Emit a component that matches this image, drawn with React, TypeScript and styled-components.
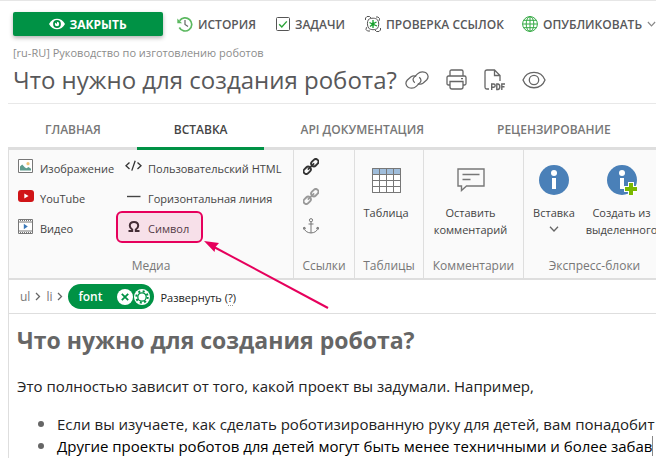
import React from "react";
import styled, { createGlobalStyle, css } from "styled-components";

const green = "#009245";
const pink = "#e6005c";
const line = "#dedede";

const GlobalStyle = createGlobalStyle`
  *, *::before, *::after { box-sizing: border-box; }
  body {
    margin: 0;
    background: #fff;
    color: #444;
    font-family: "Open Sans", "Noto Sans", sans-serif;
    font-size: 12px;
    overflow: hidden;
  }
  button {
    font: inherit;
    color: inherit;
    border: 0;
    padding: 0;
    background: none;
    white-space: nowrap;
    cursor: pointer;
  }
  svg { display: block; flex: none; }
`;

const Page = styled.div`
  border-top: 1px solid #e6e6e6;
  overflow: hidden;
`;

const TopBar = styled.header`
  display: flex;
  align-items: center;
  padding: 11px 0 0 13px;
  height: 35px;
`;

const CloseButton = styled.button`
  display: flex;
  flex: none;
  align-items: center;
  justify-content: center;
  gap: 4px;
  width: 150px;
  height: 24px;
  margin-right: 14px;
  border-radius: 2px;
  background: ${green};
  color: #fff;
  font-weight: 700;
  box-shadow: 0 2px 4px rgba(0, 0, 0, 0.3);
`;

const TopAction = styled.button<{ $gap: number }>`
  display: flex;
  flex: none;
  align-items: center;
  gap: 5px;
  margin-right: ${(p) => p.$gap}px;
  color: #58585a;
  font-weight: 600;
`;

const Trail = styled.p`
  margin: 0;
  padding: 7px 0 0 13px;
  font-size: 11px;
  line-height: 20px;
  color: #8c8c8c;
`;

const TitleRow = styled.div`
  display: flex;
  align-items: center;
  height: 41px;
  margin-left: 8px;
  padding: 0 0 7px 5px;
  border-bottom: 1px solid #e8e8e8;
`;

const Title = styled.h1`
  margin: 0 8px 0 0;
  font-size: 24px;
  line-height: 32px;
  font-weight: 400;
  white-space: nowrap;
  color: #58585a;
`;

const TitleTools = styled.div`
  display: flex;
  align-items: center;
  gap: 17px;
  color: #666;
`;

const Workspace = styled.main`
  margin-left: 8px;
`;

const Tabs = styled.nav`
  display: flex;
  height: 46px;
  padding-top: 8px;
  box-shadow: inset 0 -3px ${line};
`;

const Tab = styled.button<{ $active?: boolean }>`
  flex: none;
  padding: 0 36px 0 37px;
  border-bottom: 3px solid ${(p) => (p.$active ? green : "transparent")};
  color: ${(p) => (p.$active ? "#444" : "#777")};
  font-weight: 600;
`;

const Ribbon = styled.section`
  display: flex;
  height: 130px;
  border-left: 1px solid ${line};
  border-bottom: 2px solid ${line};
  background: #fafafa;
`;

const Group = styled.div<{ $width: number }>`
  display: flex;
  flex: none;
  flex-direction: column;
  width: ${(p) => p.$width}px;
  border-right: 1px solid ${line};
`;

const GroupBody = styled.div<{ $columns?: string }>`
  display: grid;
  grid-template-columns: ${(p) => p.$columns || "1fr"};
  height: 104px;
  padding-right: 6px;
  font-size: 11px;
`;

const GroupLabel = styled.div`
  line-height: 24px;
  text-align: center;
  color: #777;
  white-space: nowrap;
`;

const Stack = styled.div`
  display: flex;
  flex-direction: column;
  align-items: flex-start;
  padding: 3px 0 0 8px;
`;

const SmallButton = styled.button`
  position: relative;
  display: flex;
  align-items: center;
  gap: 6px;
  height: 30px;
`;

const SmallIcon = styled.span`
  display: flex;
  justify-content: center;
  width: 17px;
  padding-bottom: 4px;
`;

const LargeButton = styled.button`
  display: flex;
  flex-direction: column;
  align-items: center;
  padding-top: 15px;
  line-height: 17px;
`;

const LargeIcon = styled.span`
  display: flex;
  align-items: center;
  height: 30px;
  margin-bottom: 9px;
`;

const DropMark = styled.span`
  display: flex;
  align-items: center;
  height: 16px;
`;

const Highlight = styled.span`
  position: absolute;
  inset: -2px -14px 0 -9px;
  border: 2px solid ${pink};
  border-radius: 6px;
  background: rgba(230, 0, 92, 0.1);
`;

const Pointer = styled.svg`
  position: absolute;
  left: 100%;
  top: 100%;
  margin: -2px 0 0 15px;
  pointer-events: none;
`;

const PathBar = styled.div`
  display: flex;
  align-items: center;
  height: 34px;
  padding-left: 11px;
  border-left: 1px solid ${line};
  border-bottom: 1px solid ${line};
  color: #777;
`;

const PathLink = styled.button`
  display: flex;
  align-items: center;
  gap: 5px;
  margin-right: 5px;
`;

const Pill = styled.div`
  display: flex;
  align-items: center;
  width: 86px;
  height: 25px;
  padding: 0 4px 0 10px;
  border-radius: 13px;
  background: ${green};
  color: #fff;
  font-weight: 600;
`;

const PillIcon = styled.button<{ $first?: boolean }>`
  margin-left: ${(p) => (p.$first ? "auto" : "1px")};
`;

const Expand = styled.div`
  margin-left: 6px;
  padding-top: 2px;
  font-size: 11px;
  color: #222;
`;

const Hint = styled.abbr`
  text-decoration: none;
  border-bottom: 1px dotted #999;
`;

const Editor = styled.article`
  border-left: 1px solid ${line};
  padding: 8px 0 4px 8px;
  font-size: 15px;
  line-height: 21px;
  white-space: nowrap;
  color: #222;
`;

const Heading = styled.h2`
  margin: 0 0 18px;
  font-size: 23px;
  line-height: 36px;
  font-weight: 700;
  color: #666;
`;

const Paragraph = styled.p`
  margin: 0 0 16px;
`;

const List = styled.ul`
  margin: 0;
  padding-left: 40px;
`;

const Item = styled.li<{ $current?: boolean }>`
  &::marker { color: #666; font-size: 17px; }
  ${(p) => p.$current && css`color: #000;`}
`;

const Caret = styled.span`
  border-right: 1px solid #888;
`;

const Chevron = ({ w = 10, h = 6, color = "#666" }) => (
  <svg width={w} height={h} viewBox="0 0 10 6" fill="none" stroke={color} strokeWidth="1.3">
    <path d="M1 .8 5 5 9 .8" />
  </svg>
);

const Right = () => (
  <svg width="6" height="9" viewBox="0 0 6 9" fill="none" stroke="#666" strokeWidth="1.3">
    <path d="M1 1 4.5 4.5 1 8" />
  </svg>
);

const Links = ({ color }: { color: string }) => (
  <svg width="16" height="17" viewBox="0 0 16 17" fill="none" stroke={color}>
    <g transform="rotate(-45 8 8.5)">
      <rect x="-1.4" y="5.8" width="8" height="5.4" rx="2.7" strokeWidth="1.9" />
      <rect x="9.4" y="5.8" width="8" height="5.4" rx="2.7" strokeWidth="1.9" />
      <path d="M3.5 8.5h9" strokeWidth="1.6" />
    </g>
  </svg>
);

const Info = ({ plus }: { plus?: boolean }) => (
  <svg width="30" height="30" viewBox="0 0 30 30">
    <circle cx="15" cy="15" r="15" fill="#4a80b8" />
    <circle cx="15" cy="8" r="3" fill="#fff" />
    <path d="M13 13h4v11h-4z" fill="#fff" />
    {plus && <path d="M22 18h4v4h4v4h-4v4h-4v-4h-4v-4h4z" fill="#7ab800" stroke="#fff" strokeWidth="2" paintOrder="stroke" />}
  </svg>
);

const icons = {
  image: (
    <svg width="15" height="14" viewBox="0 0 15 14">
      <path d="M.5.5h14v13H.5z" fill="#fff" stroke="#777" />
      <circle cx="10" cy="4.7" r="1.6" fill="#efc276" />
      <path d="M2 11.5V7.4l2.2-1.8L7 8.6l1.5.6 2-1.2 2.5 1.8v1.7z" fill="#5f9c8d" />
    </svg>
  ),
  youtube: (
    <svg width="16" height="12" viewBox="0 0 16 12">
      <rect width="16" height="12" rx="3" fill="#d01417" />
      <path d="m6.3 3.5 4.3 2.5-4.3 2.5z" fill="#fff" />
    </svg>
  ),
  video: (
    <svg width="15" height="15" viewBox="0 0 15 15" fill="none" stroke="#777">
      <path d="M.5.5h14v14H.5z" fill="#fff" />
      <path d="M1 3h13M1 12h13" />
      <path d="M2 1.5h12M2 13.5h12" strokeDasharray="1 1" />
      <path d="m5.8 4.7 4 2.8-4 2.8z" fill="#3a78b8" stroke="none" />
    </svg>
  ),
  code: (
    <svg width="17" height="12" viewBox="0 0 17 12" fill="none" stroke="#333" strokeWidth="1.3">
      <path d="M4.5 2.5 1 5.7l3.5 3.2M12.5 2.5 16 5.7l-3.5 3.2M10.2.8l-3.4 9.8" />
    </svg>
  ),
  rule: (
    <svg width="15" height="8" viewBox="0 0 15 8">
      <path d="M1 4.5h13.5" stroke="#444" strokeWidth="1.4" />
    </svg>
  ),
  omega: (
    <svg width="12" height="11" viewBox="0 0 12 11" fill="none" stroke="#333" strokeWidth="2">
      <path d="M.5 10h3.7V8.5C2.6 7.6 1.8 6.3 1.8 4.8 1.8 2.5 3.5 1 6 1s4.200 1.500 4.200 3.800c0 1.500-.8 2.800-2.400 3.700V10h3.700" />
    </svg>
  ),
};

const Anchor = () => (
  <svg width="16" height="16" viewBox="0 0 16 16" fill="none" stroke="#777">
    <circle cx="8" cy="2.2" r="1.600" />
    <path d="M8 4v11M5.500 6h5M1 9.500c.5 3.500 3 5.200 7 5.500 4-.3 6.500-2 7-5.500M.3 11.500 1 9l2 1.600M15.700 11.500 15 9l-2 1.600" />
  </svg>
);

export default function App() {
  return (
    <>
      <GlobalStyle />
      <Page>
        <TopBar>
          <CloseButton>
            <svg width="16" height="12" viewBox="0 0 16 12">
              <path d="M0 6C3.500-1 12.500-1 16 6 12.500 13 3.500 13 0 6z" fill="#fff" />
              <circle cx="8" cy="6" r="3.900" fill={green} />
              <circle cx="8" cy="6" r="2.200" fill="#fff" />
              <path d="M8 6V3.500L5.500 4z" fill={green} />
            </svg>
            ЗАКРЫТЬ
          </CloseButton>
          <TopAction $gap={20}>
            <svg width="16" height="16" viewBox="0 0 16 16" fill="none">
              <path d="M2.600 4.800A6.600 6.600 0 1 1 2.300 11.500" stroke="#5cb860" strokeWidth="1.700" />
              <path d="M.3 2.500v4.700h4.800z" fill="#5cb860" />
              <path d="M8 4v4.500l3 2" stroke="#666" strokeWidth="1.200" />
            </svg>
            ИСТОРИЯ
          </TopAction>
          <TopAction $gap={20}>
            <svg width="14" height="14" viewBox="0 0 14 14" fill="none">
              <rect x=".5" y=".5" width="13" height="13" rx="1" stroke="#555" />
              <path d="m3.200 7.200 2.600 2.800 5-5.600" stroke="#2aa336" strokeWidth="1.400" />
            </svg>
            ЗАДАЧИ
          </TopAction>
          <TopAction $gap={18}>
            <svg width="16" height="16" viewBox="0 0 16 16" fill="none" stroke="#555">
              <path d="M3.500 3.500C6 1.700 10.500 1.700 12.500 3.800 14.300 6 14 10.500 12.500 12.300 10 14.300 5.800 14 3.800 12.300 2 10 2 5.500 3.500 3.500z" />
              <path d="M.5 4V2L2 .5h2.500L6 2M15.500 12v2L14 15.500h-2.500L10 14M11 1h2l1.500 1.500-.3 2.300M5 15H2.500L1 13.500l.5-2.300" />
              <path d="M8 4v3.500M8 9v3M4.500 6.500 7.500 8M8.500 8.500l3.500 1.500M5 10.500 7.500 8.500M8.500 7.500 11.500 6" stroke="#15a02b" strokeWidth="1.300" />
              <circle cx="8" cy="8" r="1.500" fill="#15a02b" stroke="none" />
            </svg>
            ПРОВЕРКА ССЫЛОК
          </TopAction>
          <TopAction $gap={0}>
            <svg width="16" height="16" viewBox="0 0 16 16" fill="none" stroke="#35a944">
              <circle cx="8" cy="8" r="7.400" />
              <ellipse cx="8" cy="8" rx="3.800" ry="7.400" />
              <path d="M8 .6v14.800M.6 8h14.800M1.800 4.300h12.400M1.800 11.700h12.400" />
            </svg>
            ОПУБЛИКОВАТЬ
            <Chevron w={9} h={6} color="#888" />
          </TopAction>
        </TopBar>
        <Trail>[ru-RU] Руководство по изготовлению роботов</Trail>
        <TitleRow>
          <Title>Что нужно для создания робота?</Title>
          <TitleTools>
            <button aria-label="Ссылка">
              <svg width="24" height="18" viewBox="0 0 25 18" fill="none" stroke="currentColor" strokeWidth="1.300">
                <path d="M10.200 11.800C7.800 9.800 8 7.600 9.600 6L13 2.600C15.500.2 19 .2 21.500 1.200 24.800 3.500 24.600 6.800 22.500 9L19 12.200C17.200 13.600 15 13.600 13.300 12.800" />
                <path d="M14.800 6.200C17.200 8.200 17 10.400 15.400 12L12 15.400C9.500 17.800 6 17.800 3.500 16.800.2 14.500.4 11.200 2.500 9L6 5.800C7.800 4.400 10 4.400 11.700 5.200" />
              </svg>
            </button>
            <button aria-label="Печать">
              <svg width="21" height="21" viewBox="0 0 21 21" fill="none" stroke="currentColor" strokeWidth="1.300">
                <path d="M4 7V2.500Q4 1 5.500 1h10Q17 1 17 2.500V7M4 16H2.500Q1 16 1 14.500v-6Q1 7 2.500 7h16Q20 7 20 8.500v6q0 1.500-1.500 1.500H17M4 12.500h13V18q0 2-2 2H6q-2 0-2-2z" />
                <path d="M15 9.700h2" />
              </svg>
            </button>
            <button aria-label="PDF">
              <svg width="21" height="22" viewBox="0 0 21 22" fill="none" stroke="currentColor" strokeWidth="1.300">
                <path d="M5 20H3Q1 20 1 18V3Q1 1 3 1h7.500L16 6.500V12M10.500 1v5.500H16" />
                <path d="M7.700 21v-6h2q1.500 0 1.500 1.600t-1.500 1.600h-2M12.800 15v5.500h1q2-.3 2-2.800t-2-2.700zM17.800 21v-6H21M17.800 17.800h2.700" strokeWidth="1.400" />
              </svg>
            </button>
            <button aria-label="Просмотр">
              <svg width="24" height="18" viewBox="0 0 24 18" fill="none" stroke="currentColor" strokeWidth="1.300">
                <path d="M1 9C5-1.300 19-1.300 23 9 19 19.300 5 19.300 1 9z" />
                <circle cx="12" cy="9" r="4.700" />
              </svg>
            </button>
          </TitleTools>
        </TitleRow>
        <Workspace>
          <Tabs>
            <Tab>ГЛАВНАЯ</Tab>
            <Tab $active>ВСТАВКА</Tab>
            <Tab>API ДОКУМЕНТАЦИЯ</Tab>
            <Tab>РЕЦЕНЗИРОВАНИЕ</Tab>
          </Tabs>
          <Ribbon>
            <Group $width={285}>
              <GroupBody $columns="108px 1fr">
                <Stack>
                  <SmallButton><SmallIcon>{icons.image}</SmallIcon>Изображение</SmallButton>
                  <SmallButton><SmallIcon>{icons.youtube}</SmallIcon>YouTube</SmallButton>
                  <SmallButton><SmallIcon>{icons.video}</SmallIcon>Видео</SmallButton>
                </Stack>
                <Stack>
                  <SmallButton><SmallIcon>{icons.code}</SmallIcon>Пользовательский HTML</SmallButton>
                  <SmallButton><SmallIcon>{icons.rule}</SmallIcon>Горизонтальная линия</SmallButton>
                  <SmallButton>
                    <SmallIcon>{icons.omega}</SmallIcon>Символ
                    <Highlight />
                    <Pointer width="126" height="68" viewBox="0 0 126 68">
                      <path d="M10 6 124 67" stroke={pink} strokeWidth="2" />
                      <path d="M0 0 15 2 11.500 6 10.500 11z" fill={pink} />
                    </Pointer>
                  </SmallButton>
                </Stack>
              </GroupBody>
              <GroupLabel>Медиа</GroupLabel>
            </Group>
            <Group $width={61}>
              <GroupBody>
                <Stack>
                  <SmallButton aria-label="Вставить ссылку"><SmallIcon><Links color="#333" /></SmallIcon></SmallButton>
                  <SmallButton aria-label="Удалить ссылку"><SmallIcon><Links color="#999" /></SmallIcon></SmallButton>
                  <SmallButton aria-label="Якорь"><SmallIcon><Anchor /></SmallIcon></SmallButton>
                </Stack>
              </GroupBody>
              <GroupLabel>Ссылки</GroupLabel>
            </Group>
            <Group $width={69}>
              <GroupBody>
                <LargeButton>
                  <LargeIcon>
                    <svg width="29" height="25" viewBox="0 0 29 25" fill="none" stroke="#777">
                      <path d="M.5.5h28v24H.5z" fill="#fff" />
                      <path d="M1 1h27v5H1z" fill="#9fbddb" stroke="none" />
                      <path d="M.5.5h28v24H.5zM.5 6.500h28M.5 12.500h28M.5 18.500h28M7.500.5v24M14.500.5v24M21.500.5v24" />
                    </svg>
                  </LargeIcon>
                  Таблица
                </LargeButton>
              </GroupBody>
              <GroupLabel>Таблицы</GroupLabel>
            </Group>
            <Group $width={100}>
              <GroupBody>
                <LargeButton>
                  <LargeIcon>
                    <svg width="28" height="24" viewBox="0 0 28 24" fill="none" stroke="#777" strokeWidth="1.400">
                      <path d="M1 1h26v17H9.500L4.500 22.500V18H1z" />
                      <path d="M5.500 6.500h17M5.500 11.500h8" />
                    </svg>
                  </LargeIcon>
                  Оставить<br />комментарий
                </LargeButton>
              </GroupBody>
              <GroupLabel>Комментарии</GroupLabel>
            </Group>
            <Group $width={142}>
              <GroupBody $columns="60px 1fr">
                <LargeButton>
                  <LargeIcon><Info /></LargeIcon>
                  Вставка
                  <DropMark><Chevron /></DropMark>
                </LargeButton>
                <LargeButton>
                  <LargeIcon><Info plus /></LargeIcon>
                  Создать из<br />выделенного
                </LargeButton>
              </GroupBody>
              <GroupLabel>Экспресс-блоки</GroupLabel>
            </Group>
          </Ribbon>
          <PathBar>
            <PathLink>ul <Right /></PathLink>
            <PathLink>li <Right /></PathLink>
            <Pill>
              font
              <PillIcon $first aria-label="Удалить">
                <svg width="16" height="16" viewBox="0 0 16 16">
                  <circle cx="8" cy="8" r="8" fill="#fff" />
                  <path d="m4.800 4.800 6.400 6.400M11.200 4.800l-6.400 6.400" stroke={green} strokeWidth="1.800" />
                </svg>
              </PillIcon>
              <PillIcon aria-label="Настройки">
                <svg width="16" height="16" viewBox="0 0 16 16" fill="none" stroke={green}>
                  <circle cx="8" cy="8" r="8" fill="#fff" stroke="none" />
                  <circle cx="8" cy="8" r="4.200" strokeWidth="1.300" />
                  <circle cx="8" cy="8" r="5.700" strokeWidth="2" strokeDasharray="2 2.477" />
                </svg>
              </PillIcon>
            </Pill>
            <Expand>Развернуть (<Hint>?</Hint>)</Expand>
          </PathBar>
          <Editor>
            <Heading>Что нужно для создания робота?</Heading>
            <Paragraph>Это полностью зависит от того, какой проект вы задумали. Например,</Paragraph>
            <List>
              <Item>Если вы изучаете, как сделать роботизированную руку для детей, вам понадобит</Item>
              <Item $current>Другие проекты роботов для детей могут быть менее техничными и более забав<Caret /></Item>
            </List>
          </Editor>
        </Workspace>
      </Page>
    </>
  );
}
